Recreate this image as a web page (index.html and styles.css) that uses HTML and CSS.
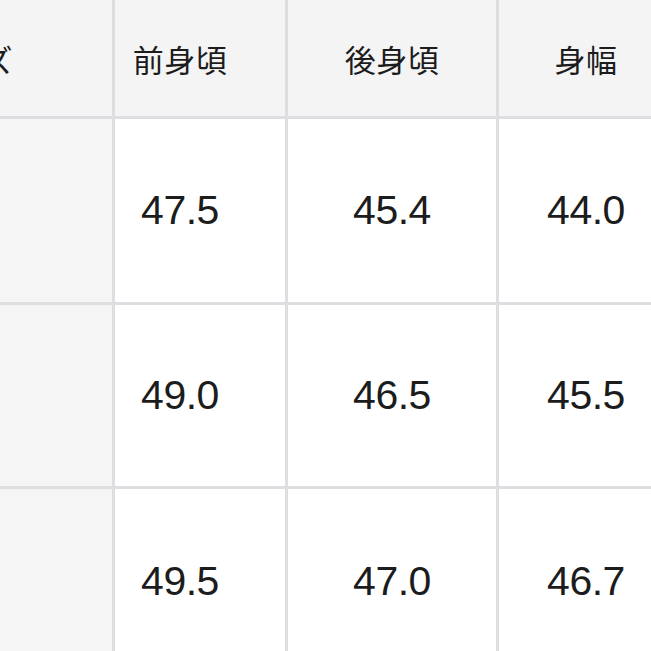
FILE: index.html
```html
<!DOCTYPE html>
<html lang="ja">
<head>
<meta charset="utf-8">
<link rel="stylesheet" href="styles.css">
</head>
<body>
<div class="table">
  <div class="cell head first"><span class="label">サイズ</span></div>
  <div class="cell head c1">前身頃</div>
  <div class="cell head">後身頃</div>
  <div class="cell head">身幅</div>

  <div class="cell side"></div>
  <div class="cell num c1">47.5</div>
  <div class="cell num">45.4</div>
  <div class="cell num">44.0</div>

  <div class="cell side"></div>
  <div class="cell num c1">49.0</div>
  <div class="cell num">46.5</div>
  <div class="cell num">45.5</div>

  <div class="cell side"></div>
  <div class="cell num c1">49.5</div>
  <div class="cell num">47.0</div>
  <div class="cell num">46.7</div>
</div>
</body>
</html>
```
FILE: styles.css
```css
html, body {
  margin: 0;
  padding: 0;
  width: 651px;
  height: 651px;
  overflow: hidden;
  background: #ffffff;
}
.table {
  display: grid;
  grid-template-columns: 200px 170px 208px 174px;
  grid-template-rows: 116px 183px 181px 184px;
  gap: 3px;
  background: #dcdee1;
  margin-left: -88px;
  width: 761px;
}
.cell {
  display: flex;
  align-items: center;
  justify-content: center;
  color: #1c1c1c;
  background: #ffffff;
}
.head {
  background: #f4f4f5;
  font-family: "Noto Sans CJK JP", "Noto Sans", sans-serif;
  font-size: 31px;
  font-weight: 400;
  letter-spacing: 0.5px;
}
.first {
  justify-content: flex-end;
  padding-right: 99px;
}
.side {
  background: #f5f5f6;
}
.num {
  font-family: "Liberation Sans", Arial, sans-serif;
  font-size: 41px;
  letter-spacing: -0.5px;
}
.c1 {
  padding-right: 40px;
}
```
